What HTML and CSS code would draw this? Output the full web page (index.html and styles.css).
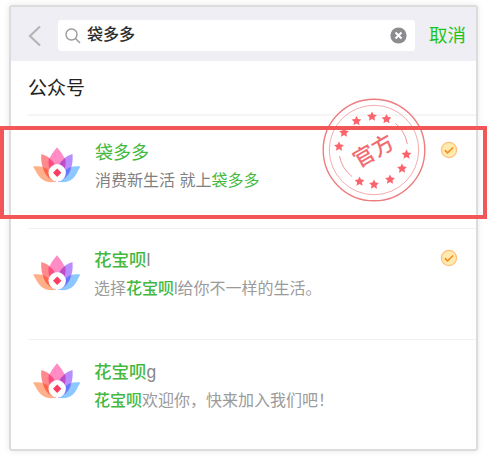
FILE: index.html
```html
<!DOCTYPE html>
<html lang="zh-CN">
<head>
<meta charset="utf-8">
<title>公众号搜索</title>
<link rel="stylesheet" href="styles.css">
</head>
<body>
<svg class="defs" width="0" height="0" aria-hidden="true">
  <symbol id="lotus" viewBox="0 0 48 36">
    <path d="M0 19.500C6 18.800 10.500 19.500 14 21.500c5 4 8 9 8.500 13.300-6 .9-11 0-14.500-3.300C4.500 28 2.500 23.500 0 19.500Z" fill="#ffb08a"/>
    <path d="M47.400 19.500C42 18.800 37.500 19.500 34 21.500c-5 4-8 9-8.500 13.300 6 .9 11 0 14.500-3.300 3.500-3.500 4.900-8 7.400-12Z" fill="#8cc8ff"/>
    <path d="M8.300 7C13 8.500 16.500 10.500 19.500 13.500c4 5 4.500 14 3.300 21.200C13.500 31 7 21 8.300 7Z" fill="#ff8a8e"/>
    <path d="M39.500 7C35 8.500 31.500 10.500 28.500 13.500c-4 5-4.500 14-3.300 21.200C34.500 31 41 21 39.500 7Z" fill="#b98cff"/>
    <path d="M24 .3C20 5 17 9 15.800 13.500c-.8 7 2.500 13 8.200 18 5.700-5 9-11 8.200-18C31 9 28 5 24 .3Z" fill="#ff8cc4"/>
    <path d="M15.800 11c-1.200 7 .2 13 6.500 18.500C25 22 22 15 15.800 11Z" fill="#fc4d7c"/>
    <path d="M32.200 11c1.200 7-.2 13-6.500 18.500C23 22 26 15 32.200 11Z" fill="#bd4cc5"/>
    <path d="M10 20c1 6.500 5 12 12.700 14.700C21.500 28.500 17.500 23 10 20Z" fill="#ff654d"/>
    <path d="M38 20c-1 6.500-5 12-12.700 14.700C26.500 28.500 30.500 23 38 20Z" fill="#6876ff"/>
    <circle cx="24.200" cy="25.800" r="8.700" fill="#fff"/>
    <path d="m24.200 21.500 4.200 4.200-4.200 4.200-4.200-4.200Z" fill="#fb3b61"/>
  </symbol>
  <symbol id="verified" viewBox="0 0 18 18">
    <circle cx="9" cy="9" r="7.600" fill="#ffebb0" stroke="#ffc07c" stroke-width="1.300"/>
    <path d="m4.800 9.200 2.700 2.600L13.200 6.500" fill="none" stroke="#f58a1f" stroke-width="1.600"/>
  </symbol>
  <symbol id="star" viewBox="-5 -5 10 10" overflow="visible">
    <path d="M0-5 1.500-1.900 4.900-1.500 2.400.9 3.100 4.200 0 2.600-3.100 4.200-2.400.9-4.900-1.500-1.500-1.900Z"/>
  </symbol>
</svg>
<main class="card">
  <header class="bar">
    <svg class="back" width="14" height="22" viewBox="0 0 14 22"><path d="M12 1.500 2 11l10 9.500"/></svg>
    <div class="search">
      <svg class="glass" width="16" height="16" viewBox="0 0 16 16"><circle cx="6.500" cy="6.500" r="5.500"/><path d="m10.500 10.500 4.500 4.500"/></svg>
      <span class="query">袋多多</span>
      <svg class="clear" width="17" height="17" viewBox="0 0 17 17"><circle cx="8.500" cy="8.500" r="8.100"/><path d="m5.500 5.500 6 6m0-6-6 6"/></svg>
    </div>
    <span class="cancel">取消</span>
  </header>
  <section class="results">
    <h1 class="heading">公众号</h1>
    <article class="row">
      <svg class="logo" width="48" height="36"><use href="#lotus"/></svg>
      <div class="copy">
        <h2 class="name first"><em>袋多多</em></h2>
        <p class="desc first">消费新生活 就上<em>袋多多</em></p>
      </div>
      <svg class="badge" width="18" height="18"><use href="#verified"/></svg>
    </article>
    <article class="row short">
      <svg class="logo" width="48" height="36"><use href="#lotus"/></svg>
      <div class="copy">
        <h2 class="name"><em>花宝呗</em>l</h2>
        <p class="desc">选择<em>花宝呗</em>l给你不一样的生活。</p>
      </div>
      <svg class="badge" width="18" height="18"><use href="#verified"/></svg>
    </article>
    <article class="row short">
      <svg class="logo" width="48" height="36"><use href="#lotus"/></svg>
      <div class="copy">
        <h2 class="name"><em>花宝呗</em>g</h2>
        <p class="desc"><em>花宝呗</em>欢迎你，快来加入我们吧！</p>
      </div>
    </article>
  </section>
</main>
<svg class="stamp" width="106" height="106" viewBox="-53 -53 106 106">
  <circle r="50.800" stroke-width="1.400"/>
  <circle r="44.700" stroke-width=".9" stroke-opacity=".7"/>
  <path d="M21.500-26.500A34 34 0 0 1 33.300-6M-34.500 6A34 34 0 0 0-22 26.500" stroke-opacity=".8"/>
  <g class="stars">
    <use href="#star" width="10" height="10" x="-40" y="-8.500"/>
    <use href="#star" width="10" height="10" x="-35" y="-22.500"/>
    <use href="#star" width="10" height="10" x="-22.500" y="-34"/>
    <use href="#star" width="10" height="10" x="-7" y="-38.500"/>
    <use href="#star" width="10" height="10" x="7.500" y="-36"/>
    <use href="#star" width="10" height="10" x="27.500" y="-.5"/>
    <use href="#star" width="10" height="10" x="23" y="13.500"/>
    <use href="#star" width="10" height="10" x="11" y="24.500"/>
    <use href="#star" width="10" height="10" x="-5" y="29.500"/>
    <use href="#star" width="10" height="10" x="-19.500" y="26.500"/>
  </g>
  <text transform="rotate(-30)" x="-1" y="8" text-anchor="middle">官方</text>
</svg>
<div class="highlight"></div>
</body>
</html>
```
FILE: styles.css
```css
* { box-sizing: border-box; }
body {
  margin: 0;
  padding: 5px 9px;
  width: 487px;
  height: 456px;
  overflow: hidden;
  position: relative;
  background: #fff;
  font-family: "Liberation Sans", "Noto Sans CJK SC", sans-serif;
}
.defs { position: absolute; }
.card {
  width: 469px;
  height: 446px;
  border: 2px solid #dcdcdc;
  border-radius: 3px;
  box-shadow: 0 0 6px rgba(0, 0, 0, .1);
}
.bar {
  display: flex;
  align-items: center;
  height: 54px;
  padding: 3px 9px 0 17px;
  background: #efeef4;
}
.back { fill: none; stroke: #b5b5b5; stroke-width: 2.2; }
.search {
  display: flex;
  align-items: center;
  width: 357px;
  height: 31px;
  margin: 0 14px 0 16px;
  padding: 0 8px 0 7px;
  background: #fff;
  border-radius: 3px;
}
.glass { fill: none; stroke: #9b9b9b; stroke-width: 1.4; }
.query {
  flex: 1;
  margin: -1px 0 0 6px;
  font-size: 16px;
  font-weight: 500;
  line-height: 24px;
  color: #2c2c2c;
}
.clear { fill: #8c8c90; }
.clear path { stroke: #fff; stroke-width: 2; }
.cancel { font-size: 18.5px; line-height: 26px; color: #1ec41e; white-space: nowrap; }
.results { padding-left: 17px; }
.heading {
  margin: 0;
  height: 55px;
  border-bottom: 2px solid #f5f5f5;
  font-size: 19px;
  font-weight: 400;
  line-height: 56px;
  color: #222;
}
.row {
  display: flex;
  align-items: flex-start;
  height: 113px;
  padding: 31px 18px 0 5px;
  border-bottom: 1px solid #f2f2f2;
}
.row.short { height: 111px; padding-top: 26px; }
.row.short:last-child { padding-top: 23px; border-bottom: 0; }
.logo { flex: none; }
.copy { flex: 1; padding-left: 13px; }
.name, .desc { margin: 0; white-space: nowrap; }
.name {
  margin: -9px 0 1px;
  font-size: 17.5px;
  font-weight: 400;
  line-height: 28px;
  color: #888;
}
.row:last-child .name { margin-top: -5px; }
.name em { font-weight: 500; }
.name.first { margin: -8px 0 0 1px; font-size: 18px; }
.name.first em { font-weight: 400; }
.desc {
  font-size: 16px;
  line-height: 28px;
  color: #9b9b9b;
}
.desc em { font-weight: 500; }
.desc.first { margin-left: 1px; color: #808080; }
.desc.first em { font-weight: 400; }
em { font-style: normal; color: #43b83e; }
.badge { flex: none; margin-top: -6px; }
.highlight {
  position: absolute;
  left: 0;
  top: 126px;
  width: 487px;
  height: 93px;
  border: 4px solid #f25656;
}
.stamp {
  position: absolute;
  left: 321px;
  top: 97px;
  fill: none;
  stroke: #ee7c7f;
}
.stars { fill: #fb646c; stroke: none; }
.stamp text {
  fill: #f26b70;
  stroke: none;
  font-size: 21.5px;
  font-weight: 500;
}
```
